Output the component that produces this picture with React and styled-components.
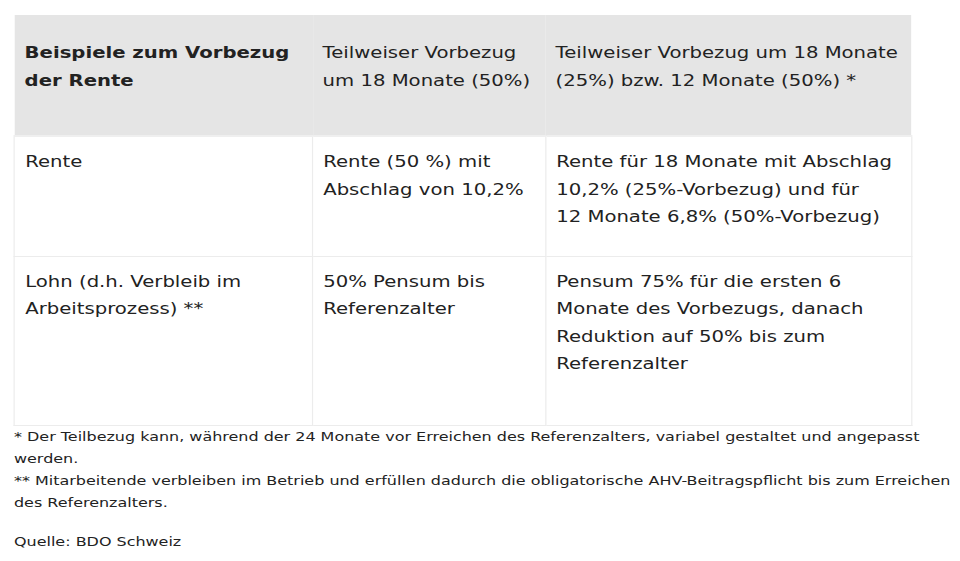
import React from "react";
import styled, { createGlobalStyle } from "styled-components";

/* The reference page is rendered with a wide humanist sans (Verdana-like),
   about 1.23x wider than DejaVu Sans at the same height, so the article
   column is stretched horizontally to reproduce those proportions. */
const STRETCH = 1.228;
const px = (n) => `${n / STRETCH}px`;

const Global = createGlobalStyle`
  html, body { margin: 0; padding: 0; background: #ffffff; overflow: hidden; }
  body { font-family: "DejaVu Sans", Verdana, sans-serif; color: #222222; }
`;

const Page = styled.article`
  width: ${px(960)};
  box-sizing: border-box;
  padding: 15px ${px(5)} 0 ${px(14)};
  transform: scaleX(${STRETCH});
  transform-origin: 0 0;
`;

const Table = styled.table`
  width: ${px(897)};
  border-collapse: collapse;
  table-layout: fixed;
  font-size: 16px;
  line-height: 27.6px;
`;

const Col = styled.col`
  width: ${(p) => px(p.$w)};
`;

const HeadCell = styled.th`
  background: #e5e5e5;
  text-align: left;
  vertical-align: top;
  font-weight: ${(p) => (p.$bold ? 700 : 400)};
  padding: 24px ${px(10)} 41px ${px(10)};
  border-bottom: 2px solid #efefef;
`;

const Cell = styled.td`
  vertical-align: top;
  padding: 11px ${px(10)} 10px ${px(10)};
  border: 1px solid #ececec;
  height: ${(p) => p.$h}px;
  box-sizing: border-box;
`;

const Notes = styled.div`
  font-size: 13px;
  line-height: 22px;
`;

const Source = styled.p`
  margin: 17px 0 0;
  font-size: 13px;
  line-height: 22px;
`;

const rentText =
  "Rente für 18 Monate mit Abschlag 10,2% (25%-Vorbezug) und für 12\u00a0Monate 6,8% (50%-Vorbezug)";

export default function App() {
  return (
    <Page>
      <Global />
      <Table>
        <colgroup>
          <Col $w={298} />
          <Col $w={233} />
          <Col $w={366} />
        </colgroup>
        <thead>
          <tr>
            <HeadCell $bold>Beispiele zum Vorbezug der Rente</HeadCell>
            <HeadCell>Teilweiser Vorbezug um 18 Monate (50%)</HeadCell>
            <HeadCell>Teilweiser Vorbezug um 18 Monate (25%) bzw. 12 Monate (50%) *</HeadCell>
          </tr>
        </thead>
        <tbody>
          <tr>
            <Cell $h={120}>Rente</Cell>
            <Cell $h={120}>Rente (50 %) mit Abschlag von 10,2%</Cell>
            <Cell $h={120}>{rentText}</Cell>
          </tr>
          <tr>
            <Cell $h={169}>Lohn (d.h. Verbleib im Arbeitsprozess) **</Cell>
            <Cell $h={169}>50% Pensum bis Referenzalter</Cell>
            <Cell $h={169}>Pensum 75% für die ersten 6 Monate des Vorbezugs, danach Reduktion auf 50% bis zum Referenzalter</Cell>
          </tr>
        </tbody>
      </Table>
      <Notes>
        * Der Teilbezug kann, während der 24 Monate vor Erreichen des Referenzalters, variabel gestaltet und angepasst werden.
        <br />
        ** Mitarbeitende verbleiben im Betrieb und erfüllen dadurch die obligatorische AHV-Beitragspflicht bis zum Erreichen des Referenzalters.
      </Notes>
      <Source>Quelle: BDO Schweiz</Source>
    </Page>
  );
}
